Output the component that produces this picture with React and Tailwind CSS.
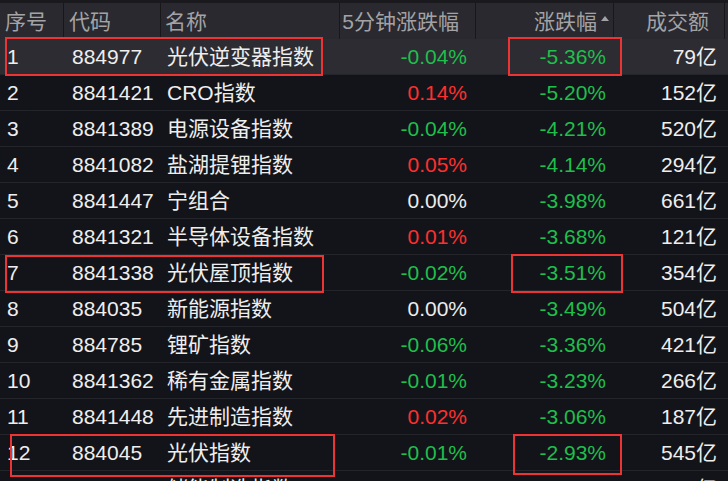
import React from 'react';

const rows = [
  ['1', '884977', '光伏逆变器指数', '-0.04%', '-5.36%', '79亿'],
  ['2', '8841421', 'CRO指数', '0.14%', '-5.20%', '152亿'],
  ['3', '8841389', '电源设备指数', '-0.04%', '-4.21%', '520亿'],
  ['4', '8841082', '盐湖提锂指数', '0.05%', '-4.14%', '294亿'],
  ['5', '8841447', '宁组合', '0.00%', '-3.98%', '661亿'],
  ['6', '8841321', '半导体设备指数', '0.01%', '-3.68%', '121亿'],
  ['7', '8841338', '光伏屋顶指数', '-0.02%', '-3.51%', '354亿'],
  ['8', '884035', '新能源指数', '0.00%', '-3.49%', '504亿'],
  ['9', '884785', '锂矿指数', '-0.06%', '-3.36%', '421亿'],
  ['10', '8841362', '稀有金属指数', '-0.01%', '-3.23%', '266亿'],
  ['11', '8841448', '先进制造指数', '0.02%', '-3.06%', '187亿'],
  ['12', '884045', '光伏指数', '-0.01%', '-2.93%', '545亿'],
  ['13', '8841394', '储能制造指数', '-0.03%', '-2.90%', '233亿'],
];

// colour for a percentage value
const pct = (v) => {
  if (v.startsWith('-')) return 'text-[#1fbf4c]';
  if (v === '0.00%') return 'text-[#ececec]';
  return 'text-[#ff2f2f]';
};

const App = () => {
  return (
    <div
      className="relative w-[728px] h-[481px] overflow-hidden bg-[#131419] text-[21px] leading-none"
      style={{ fontFamily: '"Liberation Sans", "Noto Sans CJK SC", sans-serif' }}
    >
      {/* 表头 */}
      <div className="h-[3px] bg-[#1a1a1e]" />
      <div className="flex h-[36px] bg-[#29292f] text-[#a3a3a6]">
        <div className="w-[64px] flex items-center pl-[5px] border-r border-[#18181b]">序号</div>
        <div className="w-[97px] flex items-center pl-[5px] border-r border-[#18181b]">代码</div>
        <div className="w-[179px] flex items-center pl-[4px] border-r border-[#18181b]">名称</div>
        <div className="w-[136px] flex items-center justify-end pr-[16px] border-r border-[#18181b]">5分钟涨跌幅</div>
        <div className="w-[138px] flex items-center justify-end pr-[4px] border-r border-[#18181b]">
          涨跌幅
          <span className="ml-[4px] mb-[6px] w-0 h-0 border-x-[4px] border-x-transparent border-b-[5px] border-b-[#a3a3a6]" />
        </div>
        <div className="w-[111px] flex items-center justify-end pr-[15px] border-r border-[#18181b]">成交额</div>
        <div className="flex-1" />
      </div>

      {/* 数据行 */}
      {rows.map((r, i) => (
        <div
          key={r[0]}
          className={`flex h-[36px] border-b border-[#23252b] text-[#eeeeee] ${i === 0 ? 'bg-[#2c2c32]' : ''}`}
        >
          <div className="w-[64px] flex items-center pl-[7px]">{r[0]}</div>
          <div className="w-[97px] flex items-center pl-[8px]">{r[1]}</div>
          <div className="w-[179px] flex items-center pl-[6px]">{r[2]}</div>
          <div className={`w-[136px] flex items-center justify-end pr-[9px] ${pct(r[3])}`}>{r[3]}</div>
          <div className={`w-[138px] flex items-center justify-end pr-[8px] ${pct(r[4])}`}>{r[4]}</div>
          <div className="w-[111px] flex items-center justify-end pr-[8px]">{r[5]}</div>
        </div>
      ))}

      {/* 红框标注 */}
      <div className="absolute left-[5px] top-[37px] w-[318px] h-[39px] border-2 border-[#ec3434]" />
      <div className="absolute left-[508px] top-[37px] w-[114px] h-[39px] border-2 border-[#ec3434]" />
      <div className="absolute left-[5px] top-[255px] w-[319px] h-[38px] border-2 border-[#ec3434]" />
      <div className="absolute left-[511px] top-[254px] w-[112px] h-[39px] border-2 border-[#ec3434]" />
      <div className="absolute left-[10px] top-[434px] w-[325px] h-[43px] border-2 border-[#ec3434]" />
      <div className="absolute left-[513px] top-[434px] w-[109px] h-[41px] border-2 border-[#ec3434]" />
    </div>
  );
};

export default App;
